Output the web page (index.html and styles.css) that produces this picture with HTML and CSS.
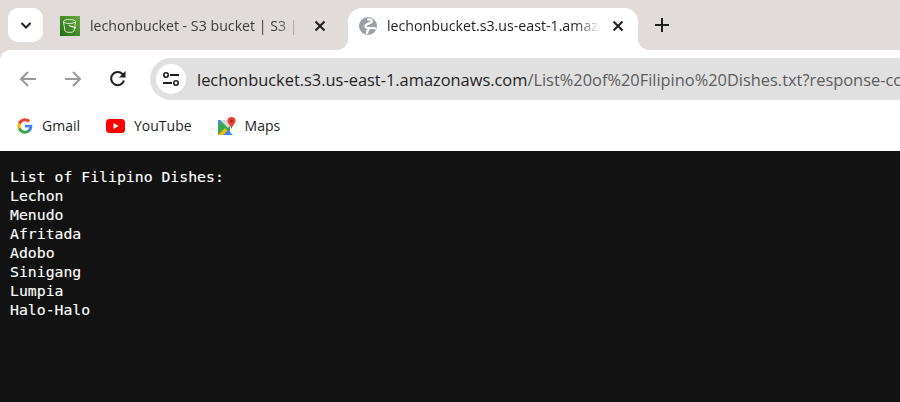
FILE: index.html
```html
<!DOCTYPE html>
<html lang="en">
<head>
    <meta charset="UTF-8">
    <meta name="viewport" content="width=device-width, initial-scale=1.0">
    <title>List of Filipino Dishes</title>
    <link rel="stylesheet" href="styles.css">
</head>
<body>
    <!-- Tab strip -->
    <div class="tab-strip">
        <div class="tab-search">
            <svg width="14" height="14" viewBox="0 0 14 14"><path d="M2.500 5l4.500 4.500L11.500 5" fill="none" stroke="#1f1f1f" stroke-width="2"/></svg>
        </div>
        <div class="tab">
            <svg class="favicon" width="20" height="20" viewBox="0 0 20 20">
                <defs>
                    <linearGradient id="s3-green" x1="0" y1="1" x2="1" y2="0">
                        <stop offset="0" stop-color="#1f6a15"/>
                        <stop offset="1" stop-color="#6aae3c"/>
                    </linearGradient>
                </defs>
                <rect width="20" height="20" fill="url(#s3-green)"/>
                <ellipse cx="9.500" cy="5.500" rx="6" ry="2" fill="none" stroke="#dce9d2" stroke-width="1"/>
                <path d="M3.500 6l1.500 9c1 1.800 8 1.800 9 0l1.500-9" fill="none" stroke="#dce9d2" stroke-width="1"/>
                <path d="M9 9.500l7 2.500" stroke="#fff" stroke-width="1.200"/>
            </svg>
            <span class="tab-title tab-title-dim">lechonbucket - S3 bucket | S3 | us-east-1</span>
            <svg class="tab-close" width="12" height="12" viewBox="0 0 12 12"><path d="M1.500 1.500l9 9M10.500 1.500l-9 9" stroke="#1f1f1f" stroke-width="2"/></svg>
        </div>
        <div class="tab tab-active">
            <svg class="favicon" width="18" height="18" viewBox="0 0 18 18">
                <circle cx="9" cy="9" r="9" fill="#9aa0a6"/>
                <path d="M8 2.500C11 2 14 3 12.500 5S6 6.500 6.500 9.500 12 10 17 11.500M10 12C8.500 13 8 14.500 8 17" fill="none" stroke="#fff" stroke-width="2.200"/>
            </svg>
            <span class="tab-title">lechonbucket.s3.us-east-1.amazonaws.com/List</span>
            <svg class="tab-close" width="12" height="12" viewBox="0 0 12 12"><path d="M1.500 1.500l9 9M10.500 1.500l-9 9" stroke="#1f1f1f" stroke-width="2"/></svg>
        </div>
        <svg class="new-tab" width="14" height="14" viewBox="0 0 14 14"><path d="M7 0v14M0 7h14" stroke="#1f1f1f" stroke-width="2"/></svg>
    </div>

    <!-- Toolbar -->
    <div class="toolbar">
        <svg class="nav-icon" width="18" height="18" viewBox="0 0 18 18"><path d="M17 9H2M9 2L2 9l7 7" fill="none" stroke="#9a9a9a" stroke-width="2"/></svg>
        <svg class="nav-icon" width="18" height="18" viewBox="0 0 18 18"><path d="M1 9h15M9 2l7 7-7 7" fill="none" stroke="#9a9a9a" stroke-width="2"/></svg>
        <svg class="nav-icon" width="18" height="18" viewBox="0 0 18 18"><path d="M15 10.500A6.600 6.600 0 1 1 13.500 4L15.500 6" fill="none" stroke="#1f1f1f" stroke-width="2"/><path d="M16.500 1v6.500H10z" fill="#1f1f1f"/></svg>
        <div class="address-bar">
            <div class="site-info">
                <svg width="18" height="14" viewBox="0 0 18 14">
                    <circle cx="4" cy="3" r="2.200" fill="none" stroke="#1f1f1f" stroke-width="1.600"/>
                    <path d="M8 3h9M1 11h9" stroke="#1f1f1f" stroke-width="1.800"/>
                    <circle cx="14" cy="11" r="2.200" fill="none" stroke="#1f1f1f" stroke-width="1.600"/>
                </svg>
            </div>
            <span class="url"><span class="url-host">lechonbucket.s3.us-east-1.amazonaws.com</span>/List%20of%20Filipino%20Dishes.txt?response-content</span>
        </div>
    </div>

    <!-- Bookmarks -->
    <div class="bookmarks">
        <div class="bookmark">
            <svg width="16" height="16" viewBox="0 0 48 48">
                <path fill="#4285f4" d="M46 24.500c0-1.600-.1-3.100-.4-4.500H24v8.500h12.400c-.5 2.900-2.100 5.300-4.600 6.900v5.700h7.400C43.500 36.700 46 31.100 46 24.500z"/>
                <path fill="#34a853" d="M24 47c6.200 0 11.400-2 15.200-5.500l-7.400-5.700c-2 1.400-4.700 2.200-7.800 2.200-6 0-11-4-12.800-9.500H3.500v5.900C7.300 41.900 15 47 24 47z"/>
                <path fill="#fbbc05" d="M11.200 28.500c-.5-1.400-.7-2.900-.7-4.500s.3-3.100.7-4.500v-5.900H3.500C2 16.700 1 20.200 1 24s.9 7.300 2.500 10.400z"/>
                <path fill="#ea4335" d="M24 10c3.400 0 6.400 1.200 8.800 3.400l6.600-6.600C35.400 3.200 30.200 1 24 1 15 1 7.300 6.100 3.500 13.600l7.700 5.900C13 14 18 10 24 10z"/>
            </svg>
            <span>Gmail</span>
        </div>
        <div class="bookmark">
            <svg width="19" height="14" viewBox="0 0 19 14">
                <rect width="19" height="14" rx="3.500" fill="#f00"/>
                <path d="M7.500 4v6l5-3z" fill="#fff"/>
            </svg>
            <span>YouTube</span>
        </div>
        <div class="bookmark">
            <svg width="18" height="18" viewBox="0 0 18 18">
                <path d="M0 3h12v15H0z" fill="#34a853"/>
                <path d="M0 3h5L0 8z" fill="#4285f4"/>
                <path d="M0 18l7-7 5 7z" fill="#fbbc05"/>
                <path d="M5 18l5-5 5 5z" fill="#4285f4"/>
                <path d="M2 3l8 8 3-3V3z" fill="#d9d9d9"/>
                <path d="M13.500 0a4 4 0 0 1 4 4c0 2.500-3 4-4 8-1-4-4-5.500-4-8a4 4 0 0 1 4-4z" fill="#ea4335"/>
                <circle cx="13.500" cy="4" r="1.400" fill="#a52714"/>
            </svg>
            <span>Maps</span>
        </div>
    </div>

    <!-- Page content -->
    <pre class="page-text">List of Filipino Dishes:
Lechon
Menudo
Afritada
Adobo
Sinigang
Lumpia
Halo-Halo</pre>
</body>
</html>
```

FILE: styles.css
```css
/* Global Styles */
html, body {
    height: 100%;
}
body {
    margin: 0;
    display: flex;
    flex-direction: column;
    overflow: hidden;
    background-color: #e1dbd9;
    font-family: "Open Sans", "Noto Sans", Arial, sans-serif;
    color: #1f1f1f;
}

/* Tab strip */
.tab-strip {
    display: flex;
    align-items: flex-end;
    height: 50px;
    flex-shrink: 0;
    background-color: #e1dbd9;
}
.tab-search {
    display: flex;
    align-items: center;
    justify-content: center;
    width: 35px;
    height: 34px;
    margin: 0 9px 8px 8px;
    background-color: #fff;
    border-radius: 10px;
}
.tab {
    position: relative;
    display: flex;
    align-items: center;
    width: 291px;
    height: 42px;
    padding: 0 17px 7px 8px;
    box-sizing: border-box;
    font-size: 14.200px;
}
.tab-active {
    width: 290px;
    margin-left: 5px;
    padding: 0 14px 7px 11px;
    background-color: #fff;
    border-radius: 14px 14px 0 0;
}
.tab-active::before,
.tab-active::after {
    content: "";
    position: absolute;
    bottom: 0;
    width: 12px;
    height: 12px;
}
.tab-active::before {
    left: -12px;
    background: radial-gradient(circle at 0 0, transparent 12px, #fff 12.500px);
}
.tab-active::after {
    right: -12px;
    background: radial-gradient(circle at 100% 0, transparent 12px, #fff 12.500px);
}
.favicon {
    flex-shrink: 0;
}
.tab-title {
    flex: 1;
    margin-left: 10px;
    overflow: hidden;
    white-space: nowrap;
    -webkit-mask-image: linear-gradient(to right, #000 88%, transparent 100%);
    mask-image: linear-gradient(to right, #000 88%, transparent 100%);
}
.tab-title-dim {
    color: #3c3c3c;
}
.tab-close {
    flex-shrink: 0;
    margin-left: 12px;
}
.new-tab {
    margin: 0 0 18px 17px;
}

/* Toolbar */
.toolbar {
    display: flex;
    align-items: flex-end;
    height: 50px;
    flex-shrink: 0;
    padding-left: 19px;
    box-sizing: border-box;
    background-color: #fff;
    border-radius: 10px 0 0 0;
    overflow: hidden;
}
.nav-icon {
    flex-shrink: 0;
    margin: 0 27px 12px 0;
}
.nav-icon:nth-child(3) {
    margin-right: 23px;
}
.address-bar {
    display: flex;
    align-items: center;
    flex: 1;
    min-width: 0;
    height: 42px;
    padding-left: 6px;
    background-color: #e0e0e0;
    border-radius: 21px 0 0 21px;
}
.site-info {
    display: flex;
    align-items: center;
    justify-content: center;
    flex-shrink: 0;
    width: 30px;
    height: 30px;
    background-color: #fff;
    border-radius: 50%;
}
.url {
    margin-left: 11px;
    font-size: 16.400px;
    color: #5c5c5c;
    white-space: nowrap;
}
.url-host {
    color: #1f1f1f;
}

/* Bookmarks */
.bookmarks {
    display: flex;
    align-items: center;
    gap: 26px;
    height: 51px;
    flex-shrink: 0;
    padding-left: 17px;
    box-sizing: border-box;
    background-color: #fff;
    font-size: 14px;
}
.bookmark {
    display: flex;
    align-items: center;
    gap: 9px;
}

/* Page text */
.page-text {
    flex: 1;
    margin: 0;
    padding: 16px 10px 0;
    background-color: #121212;
    color: #fff;
    font-family: "DejaVu Sans Mono", monospace;
    font-size: 14.800px;
    line-height: 19px;
    -webkit-text-stroke: 0.12px #fff;
}
```
